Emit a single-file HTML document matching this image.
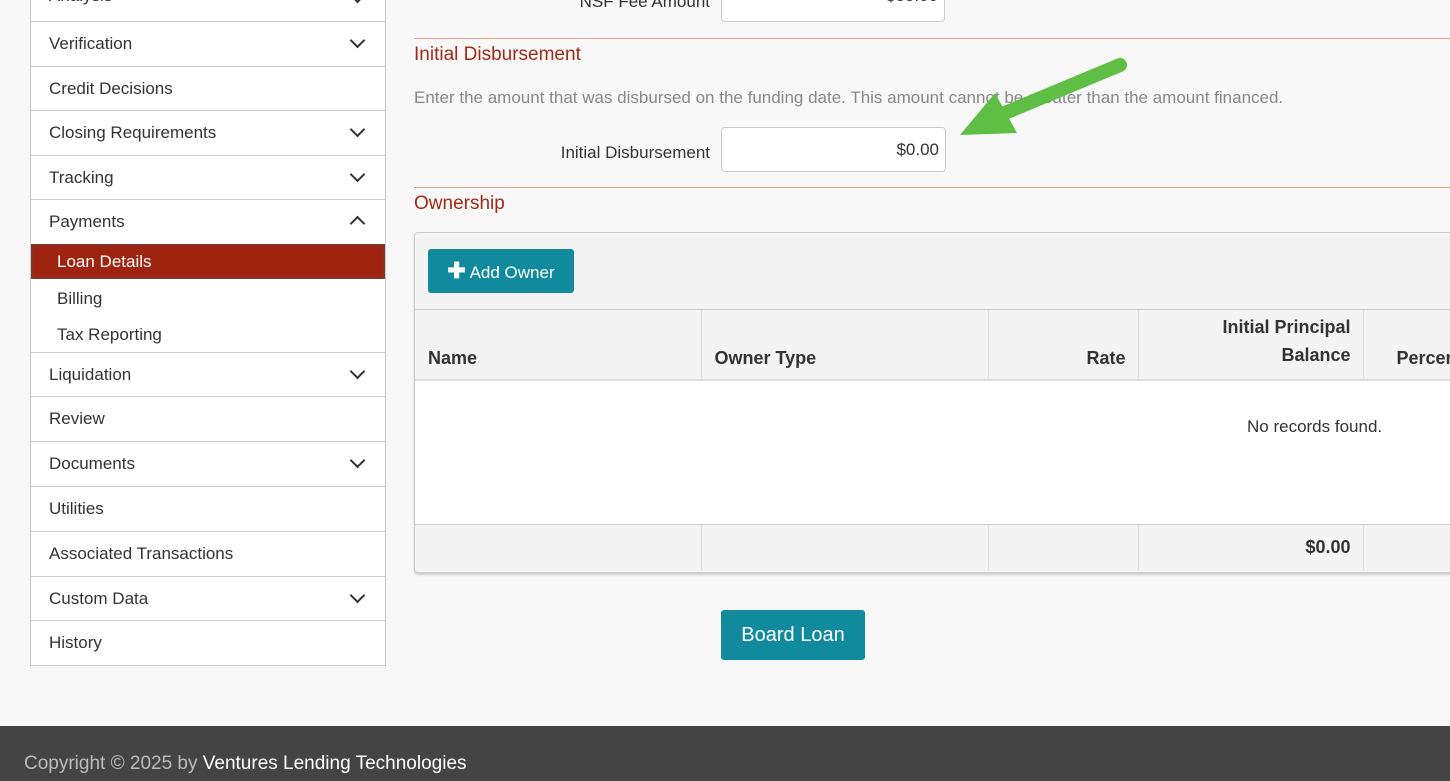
<!DOCTYPE html><html><head><style>
html,body{margin:0;width:1450px;height:781px;overflow:hidden}
body{background:#f8f8f8;font-family:"Liberation Sans",sans-serif;color:#333;position:relative}
.a{position:absolute}
.side{left:30px;top:-10px;width:354px;height:675px;background:#fff;border:1px solid #ccc;border-top:none}
.it{position:absolute;left:0;width:354px;border-bottom:1px solid #ccc;font-size:17px;box-sizing:border-box;padding-left:18px}
.ch{position:absolute;right:22px;width:9px;height:9px;border-right:2px solid #333;border-bottom:2px solid #333;transform:rotate(45deg)}
.up{transform:rotate(-135deg)}
.sub{position:absolute;left:26px;font-size:17px}
td{border-right:1px solid #ddd;box-sizing:border-box}
</style></head><body>
<div class="a side">
<div class="it" style="top:0;height:32px;line-height:12px">Analysis<span class="ch" style="top:0"></span></div>
<div class="it" style="top:32px;height:45px;line-height:44px">Verification<span class="ch" style="top:13px"></span></div>
<div class="it" style="top:77px;height:44px;line-height:44px">Credit Decisions</div>
<div class="it" style="top:121px;height:45px;line-height:44px">Closing Requirements<span class="ch" style="top:13px"></span></div>
<div class="it" style="top:166px;height:44px;line-height:44px">Tracking<span class="ch" style="top:13px"></span></div>
<div class="it" style="top:210px;height:44px;line-height:44px;border:none">Payments<span class="ch up" style="top:18px"></span></div>
<div class="a" style="top:254px;left:0;width:354px;height:35px;background:#9e2410;box-shadow:0 0 4px #555 inset;color:#fff;font-size:17px;line-height:36px;padding-left:26px;box-sizing:border-box">Loan Details</div>
<div class="sub" style="top:299px">Billing</div>
<div class="sub" style="top:335px">Tax Reporting</div>
<div class="it" style="top:309px;height:54px"></div>
<div class="it" style="top:363px;height:44px;line-height:44px">Liquidation<span class="ch" style="top:13px"></span></div>
<div class="it" style="top:407px;height:45px;line-height:44px">Review</div>
<div class="it" style="top:452px;height:45px;line-height:44px">Documents<span class="ch" style="top:13px"></span></div>
<div class="it" style="top:497px;height:45px;line-height:44px">Utilities</div>
<div class="it" style="top:542px;height:45px;line-height:44px">Associated Transactions</div>
<div class="it" style="top:587px;height:44px;line-height:44px">Custom Data<span class="ch" style="top:13px"></span></div>
<div class="it" style="top:631px;height:44px;line-height:44px;border:none">History</div>
</div>

<div class="a" style="left:540px;top:-8px;width:170px;text-align:right;font-size:17px">NSF Fee Amount</div>
<div class="a" style="left:721px;top:-10px;width:224px;height:32px;background:#fff;border:1px solid #ccc;border-radius:4px;box-sizing:border-box;text-align:right;padding-right:6px;font-size:17px;line-height:10px">$55.00</div>
<div class="a" style="left:414px;top:38px;width:1036px;height:1px;background:#d9a091"></div>
<div class="a" style="left:414px;top:44px;font-size:19px;color:#a12a17">Initial Disbursement</div>
<div class="a" style="left:414px;top:88px;font-size:17px;color:#888">Enter the amount that was disbursed on the funding date. This amount cannot be greater than the amount financed.</div>
<div class="a" style="left:500px;top:143px;width:210px;text-align:right;font-size:17px">Initial Disbursement</div>
<div class="a" style="left:721px;top:127px;width:225px;height:45px;background:#fff;border:1px solid #ccc;border-radius:4px;box-sizing:border-box;text-align:right;padding-right:6px;font-size:17px;line-height:43px">$0.00</div>
<svg class="a" style="left:955px;top:55px" width="180" height="90"><path d="M165 10 L45 60" stroke="#5fbf45" stroke-width="14" stroke-linecap="round"/><path d="M5 80 L40 38 L62 78 Z" fill="#5fbf45"/></svg>
<div class="a" style="left:414px;top:187px;width:1036px;height:1px;background:#d9a091"></div>
<div class="a" style="left:414px;top:193px;font-size:19px;color:#a12a17">Ownership</div>
<div class="a" style="left:414px;top:232px;width:1040px;height:339px;border:1px solid #ccc;border-radius:4px;background:#f4f4f4;box-shadow:0 2px 2px #ccc"></div>
<div class="a" style="left:428px;top:249px;width:146px;height:44px;background:#108a9c;border-radius:3px;color:#fff;font-size:17px;line-height:44px;text-align:center"><b style="font-size:22px">✚</b> Add Owner</div>
<div class="a" style="left:415px;top:309px;width:1040px;height:1px;background:#ccc"></div>
<table class="a" style="left:415px;top:310px;border-collapse:collapse;font-size:18px;width:1100px;table-layout:fixed">
<colgroup><col style="width:286px"><col style="width:287px"><col style="width:150px"><col style="width:225px"><col></colgroup>
<tr style="height:70px;background:#f4f4f4;font-weight:bold;border-bottom:2px solid #ddd"><td style="padding:0 13px 10px;vertical-align:bottom">Name</td><td style="padding:0 13px 10px;vertical-align:bottom">Owner Type</td><td style="text-align:right;padding:0 12px 10px;vertical-align:bottom">Rate</td><td style="text-align:right;padding:0 12px 10px;vertical-align:bottom;line-height:28px">Initial Principal<br>Balance</td><td style="padding:0 0 10px 33px;vertical-align:bottom">Percentage</td></tr>
<tr style="height:144px;background:#fff;border-bottom:1px solid #ccc"><td colspan="5" style="border:none;padding:0 0 50px 832px;vertical-align:middle;font-size:17px">No records found.</td></tr>
<tr style="height:46px;background:#f4f4f4;font-weight:bold"><td></td><td></td><td></td><td style="text-align:right;padding-right:12px">$0.00</td><td></td></tr>
</table>
<div class="a" style="left:721px;top:610px;width:144px;height:50px;background:#108a9c;border-radius:3px;color:#fff;font-size:20px;line-height:50px;text-align:center">Board Loan</div>
<div class="a" style="left:0;top:726px;width:1450px;height:55px;background:#444;color:#bbb;font-size:19px;line-height:76px;padding-left:24px;box-sizing:border-box;overflow:hidden">Copyright © 2025 by <span style="color:#fff">Ventures Lending Technologies</span></div>
</body></html>
